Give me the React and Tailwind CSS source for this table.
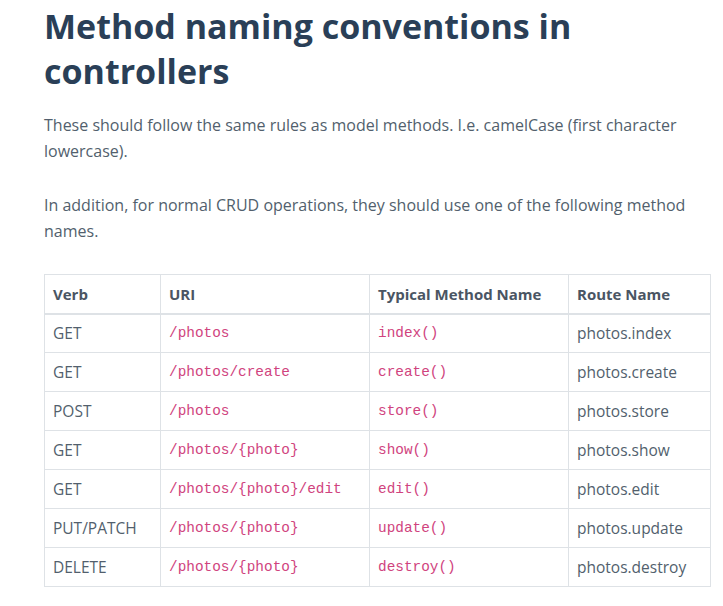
import React from "react";

const rows = [
  ["GET", "/photos", "index()", "photos.index"],
  ["GET", "/photos/create", "create()", "photos.create"],
  ["POST", "/photos", "store()", "photos.store"],
  ["GET", "/photos/{photo}", "show()", "photos.show"],
  ["GET", "/photos/{photo}/edit", "edit()", "photos.edit"],
  ["PUT/PATCH", "/photos/{photo}", "update()", "photos.update"],
  ["DELETE", "/photos/{photo}", "destroy()", "photos.destroy"],
];

export default function App() {
  return (
    <div className="min-h-[606px] bg-white px-[44px] pt-[4px] font-['Open_Sans','Liberation_Sans',sans-serif]">
      <h1 className="text-[34px] font-bold leading-[45px] text-[#2a3f57]">
        Method naming conventions in controllers
      </h1>
      <p className="mt-[19px] text-[16px] leading-[25.6px] text-[#525f6d] w-[650px]">
        These should follow the same rules as model methods. I.e. camelCase (first character lowercase).
      </p>
      <p className="mt-[29px] text-[16px] leading-[25.6px] text-[#525f6d] w-[650px]">
        In addition, for normal CRUD operations, they should use one of the following method names.
      </p>
      <table className="mt-[30px] w-[666px] table-fixed border-collapse text-[15.5px] text-[#525f6d]">
        <colgroup>
          <col className="w-[116px]" />
          <col className="w-[209px]" />
          <col className="w-[199px]" />
          <col className="w-[142px]" />
        </colgroup>
        <thead>
          <tr className="h-[39px]">
            {["Verb", "URI", "Typical Method Name", "Route Name"].map((h) => (
              <th
                key={h}
                className="border border-[#dee2e6] border-b-2 px-[8px] text-left text-[15px] font-bold text-[#4a5563]"
              >
                {h}
              </th>
            ))}
          </tr>
        </thead>
        <tbody>
          {rows.map((r, i) => (
            <tr key={i} className="h-[39px]">
              <td className="border border-[#dee2e6] px-[8px]">{r[0]}</td>
              <td className="border border-[#dee2e6] px-[8px] font-['Liberation_Mono',monospace] text-[14.4px] text-[#d0437e]">
                {r[1]}
              </td>
              <td className="border border-[#dee2e6] px-[8px] font-['Liberation_Mono',monospace] text-[14.4px] text-[#d0437e]">
                {r[2]}
              </td>
              <td className="border border-[#dee2e6] px-[8px]">{r[3]}</td>
            </tr>
          ))}
        </tbody>
      </table>
    </div>
  );
}
